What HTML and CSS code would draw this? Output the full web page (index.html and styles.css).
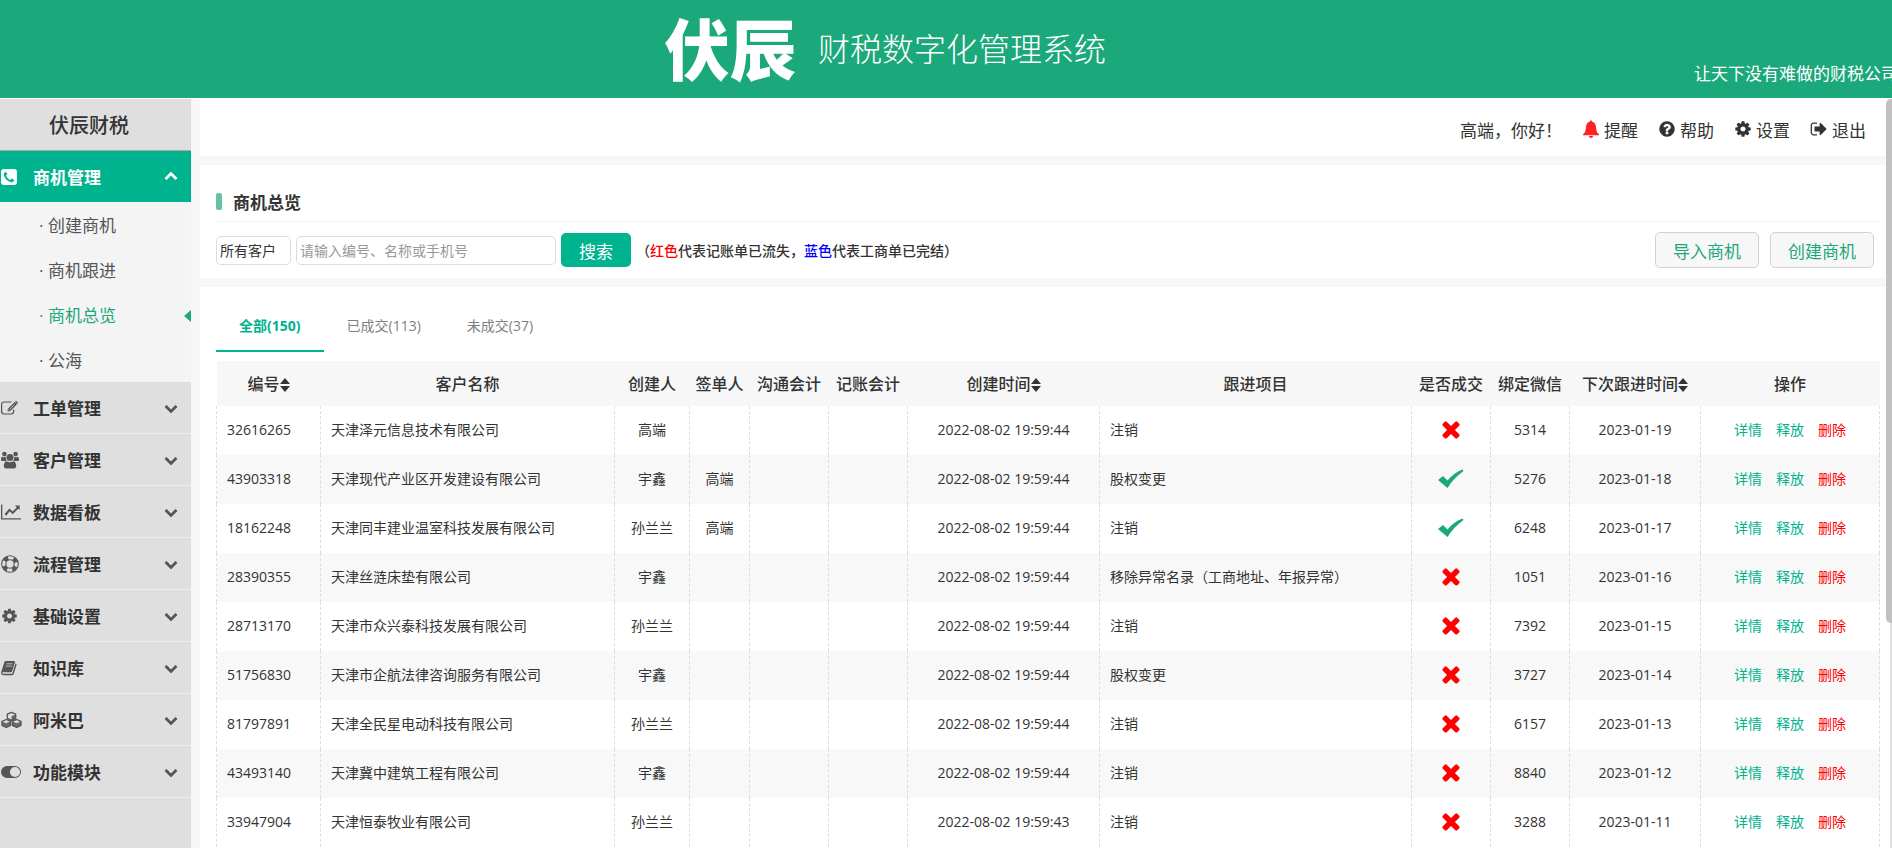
FILE: index.html
```html
<!DOCTYPE html>
<html lang="zh-CN">
<head>
    <meta charset="UTF-8">
    <meta name="viewport" content="width=device-width, initial-scale=1.0">
    <title>财税数字化管理系统</title>
    <link rel="stylesheet" href="styles.css">
</head>
<body>
    <svg class="sprite" aria-hidden="true">
        <symbol id="i-cog" viewBox="0 0 1792 1792"><path d="M1152 896q0-106-75-181t-181-75-181 75-75 181 75 181 181 75 181-75 75-181zm512-109v222q0 12-8 23t-20 13l-185 28q-19 54-39 91 35 50 107 138 10 12 10 25t-9 23q-27 37-99 108t-94 71q-12 0-26-9l-138-108q-44 23-91 38-16 136-29 186-7 28-36 28h-222q-14 0-24.5-8.5t-11.5-21.5l-28-184q-49-16-90-37l-141 107q-10 9-25 9-14 0-25-11-126-114-165-168-7-10-7-23 0-12 8-23 15-21 51-66.5t54-70.5q-27-50-41-99l-183-27q-13-2-21-12.5t-8-23.5v-222q0-12 8-23t19-13l186-28q14-46 39-92-40-57-107-138-10-12-10-24 0-10 9-23 26-36 98.5-107.5t94.5-71.5q13 0 26 10l138 107q44-23 91-38 16-136 29-186 7-28 36-28h222q14 0 24.5 8.5t11.5 21.5l28 184q49 16 90 37l142-107q9-9 24-9 13 0 25 10 129 119 165 170 7 8 7 22 0 12-8 23-15 21-51 66.5t-54 70.5q26 50 41 98l183 28q13 2 21 12.5t8 23.5z"/></symbol>
        <symbol id="i-times" viewBox="0 0 1792 1792"><path d="M1490 1322q0 40-28 68l-136 136q-28 28-68 28t-68-28l-294-294-294 294q-28 28-68 28t-68-28l-136-136q-28-28-28-68t28-68l294-294-294-294q-28-28-28-68t28-68l136-136q28-28 68-28t68 28l294 294 294-294q28-28 68-28t68 28l136 136q28 28 28 68t-28 68l-294 294 294 294q28 28 28 68z"/></symbol>
        <symbol id="i-check" viewBox="0 0 26 20"><path d="M0 11L5 7L9.500 11.500C14 6 19 2.500 24.500 0.500L25.500 2C19 6.500 13.500 12.500 9.500 19Z"/></symbol>
        <symbol id="i-down" viewBox="0 0 1792 1792"><path d="M1683 808l-742 741q-19 19-45 19t-45-19l-742-741q-19-19-19-45.5t19-45.5l166-165q19-19 45-19t45 19l531 531 531-531q19-19 45-19t45 19l166 165q19 19 19 45.5t-19 45.5z"/></symbol>
        <symbol id="i-help" viewBox="0 0 1792 1792"><path d="M1024 1376v-192q0-14-9-23t-23-9h-192q-14 0-23 9t-9 23v192q0 14 9 23t23 9h192q14 0 23-9t9-23zm256-672q0-88-55.5-163t-138.5-116-170-41q-243 0-371 213-15 24 8 42l132 100q7 6 19 6 16 0 25-12 53-68 86-92 34-24 86-24 48 0 85.500 26t37.500 59q0 38-20 61t-68 45q-63 28-115.500 86.500t-52.500 125.500v36q0 14 9 23t23 9h192q14 0 23-9t9-23q0-19 21.500-49.500t54.500-49.500q32-18 49-28.500t46-35 44.500-48 28-60.500 12.500-81zm384 192q0 209-103 385.500t-279.500 279.500-385.500 103-385.500-103-279.500-279.500-103-385.500 103-385.500 279.500-279.500 385.500-103 385.500 103 279.500 279.500 103 385.500z"/></symbol>
        <symbol id="i-out" viewBox="0 0 1792 1792"><path d="M704 1440q0 4 1 20t.5 26.5-3 23.5-10 19.5-20.5 6.5h-320q-119 0-203.500-84.500t-84.500-203.500v-704q0-119 84.500-203.500t203.500-84.500h320q13 0 22.500 9.500t9.500 22.500q0 4 1 20t.5 26.500-3 23.500-10 19.500-20.500 6.500h-320q-66 0-113 47t-47 113v704q0 66 47 113t113 47h312l11.500 1 11.500 3 8 5.500 7 9 2 13.500zm928-544q0 26-19 45l-544 544q-19 19-45 19t-45-19-19-45v-288h-448q-26 0-45-19t-19-45v-384q0-26 19-45t45-19h448v-288q0-26 19-45t45-19 45 19l544 544q19 19 19 45z"/></symbol>
        <symbol id="i-bell" viewBox="0 0 16 18"><path d="M8 0.500c-.8 0-1.300.5-1.300 1.200C4 2.300 3.200 4.600 3 7c-.2 3.500-.8 5.500-3 7.300V15.300h16v-1C13.800 12.500 13.200 10.500 13 7c-.2-2.400-1-4.700-3.700-5.300C9.300 1 8.800.5 8 .5zM5.800 16c.2 1.200 1 2 2.200 2s2-.8 2.200-2z"/></symbol>
        <symbol id="i-phone" viewBox="0 0 16 16"><path fill-rule="evenodd" d="M3 0h10a3 3 0 0 1 3 3v10a3 3 0 0 1-3 3H3a3 3 0 0 1-3-3V3a3 3 0 0 1 3-3zM4.500 3C3.300 3.500 2.700 4.500 2.800 5.600c.5 3.800 4 7.300 7.800 7.700 1.200 0 2.300-.8 2.600-2.200L10.700 9.600 9.300 11C7.500 10.200 5.800 8.500 5 6.700L6.300 5.400 5 3z"/></symbol>
        <symbol id="i-edit" viewBox="0 0 17 14"><path fill="none" stroke="currentColor" stroke-width="1.200" d="M10.500 1H3A2.400 2.400 0 0 0 .6 3.400v7.200A2.400 2.400 0 0 0 3 13h7.200a2.400 2.400 0 0 0 2.400-2.400V8.500"/><path d="M13.700 1l2.300 2.300-7 7H6.700V8zM14.300.4c.4-.4 1-.4 1.400 0l.9.900c.4.4.4 1 0 1.400l-.3.300L14 .7z"/><path fill="none" stroke="#dfdfdf" stroke-width=".7" d="M8.700 8.300l4.800-4.800M7.500 8.300l1.200 1.200"/></symbol>
        <symbol id="i-users" viewBox="0 0 18 17"><circle cx="3.400" cy="2.600" r="2.300"/><circle cx="14.600" cy="2.600" r="2.300"/><circle cx="9" cy="6" r="3.500"/><path d="M1.300 5.200c1 .6 2.500.7 4 .2C4.500 7.500 5 8.700 6 9.500H1.500C.5 9.500 0 9 0 8c0-1.300.4-2.600 1.300-2.800zM16.700 5.200c-1 .6-2.500.7-4 .2.800 2.100.3 3.300-.7 4.100h4.500c1 0 1.500-.5 1.500-1.500 0-1.300-.4-2.600-1.300-2.800zM5.600 9.800c2.200 1.200 4.600 1.200 6.800 0 2 .4 2.800 2.500 2.800 4.800 0 1.500-.9 2.400-2.300 2.400H5.100c-1.400 0-2.300-.9-2.300-2.400 0-2.300.8-4.400 2.800-4.800z"/></symbol>
        <symbol id="i-chart" viewBox="0 0 20 15"><path d="M0 0h1.300v13.700H20V15H0zM14 1h4.700v4.700l-1.500-1.500-5.500 5.500-3-3-3.500 4.600-1.700-1.700 5-5.700 3.200 3 4-4z"/></symbol>
        <symbol id="i-ring" viewBox="0 0 18 18"><path fill="none" stroke="currentColor" stroke-width="1.100" d="M9 .7a8.300 8.300 0 1 1 0 16.600A8.300 8.300 0 0 1 9 .7zM9 4.800a4.200 4.200 0 1 1 0 8.400 4.200 4.200 0 0 1 0-8.400z"/><circle cx="9" cy="9" r="6.300" fill="none" stroke="currentColor" stroke-width="4" stroke-dasharray="4.500 5.396" stroke-dashoffset="-2.700"/></symbol>
        <symbol id="i-book" viewBox="0 0 17 16"><path fill-rule="evenodd" d="M5.200.6h8.600c.8 0 1.200.6 1 1.300l-3 9.600c-.2.700-.8 1.100-1.500 1.100H2c-.7 0-1 .4-.8.900.2.500.6.600 1.100.600h8.900c.5 0 .8-.3 1-.7L15.500 3c1 .4 1.200 1 1 1.800l-2.900 9.300c-.3.900-1 1.500-2 1.500H2.500C.8 15.600-.3 14 .2 12.500L3.500 2C3.800 1.100 4.300.6 5.200.6zM5.900 3.200l-.3.900h6.500l.3-.9zM5.200 5.600l-.3.900h6.500l.3-.9z"/></symbol>
        <symbol id="i-cubes" viewBox="0 0 21 17"><path fill="#dfdfdf" stroke="currentColor" stroke-width="1.300" stroke-linejoin="round" d="M10.500.8l4.200 1.800v4.200l-4.200 2-4.200-2V2.600zM5.300 8l4.300 1.800V14l-4.300 2L1 14V9.800zM15.700 8L20 9.800V14l-4.300 2-4.300-2V9.800z"/><path d="M10.500 4.700l4.200-2v4.100l-4.200 2zM5.300 11.800l4.300-2V14l-4.300 2zM15.700 11.800l4.300-2V14l-4.300 2zM1 10l4.300 1.800V16L1 14zM11.400 10l4.300 1.800V16l-4.300-2z" fill-opacity=".85"/></symbol>
        <symbol id="i-toggle" viewBox="0 0 20 12"><path fill-rule="evenodd" d="M6 0h8a6 6 0 0 1 0 12H6A6 6 0 0 1 6 0zm8 .9a5.100 5.100 0 1 0 0 10.200A5.100 5.100 0 0 0 14 .9z"/></symbol>
        <symbol id="i-sort" viewBox="0 0 10 14"><path d="M5 0l5 6H0zM5 14L0 8h10z"/></symbol>
    </svg>

    <header class="banner">
        <div class="brand">
            <span class="brand-logo">伏辰</span>
            <h1 class="brand-name">财税数字化管理系统</h1>
        </div>
        <p class="slogan">让天下没有难做的财税公司</p>
    </header>

    <div class="layout">
        <nav class="sidebar">
            <h2 class="company">伏辰财税</h2>
            <button class="menu open"><svg class="menu-icon" style="--w: 16px"><use href="#i-phone"/></svg>商机管理<svg class="arrow"><use href="#i-down"/></svg></button>
            <ul class="submenu">
                <li><a href="#">· 创建商机</a></li>
                <li><a href="#">· 商机跟进</a></li>
                <li><a href="#" class="current">· 商机总览</a></li>
                <li><a href="#">· 公海</a></li>
            </ul>
            <button class="menu"><svg class="menu-icon" style="--w: 17px"><use href="#i-edit"/></svg>工单管理<svg class="arrow"><use href="#i-down"/></svg></button>
            <button class="menu"><svg class="menu-icon" style="--w: 18px"><use href="#i-users"/></svg>客户管理<svg class="arrow"><use href="#i-down"/></svg></button>
            <button class="menu"><svg class="menu-icon" style="--w: 20px"><use href="#i-chart"/></svg>数据看板<svg class="arrow"><use href="#i-down"/></svg></button>
            <button class="menu"><svg class="menu-icon" style="--w: 18px"><use href="#i-ring"/></svg>流程管理<svg class="arrow"><use href="#i-down"/></svg></button>
            <button class="menu"><svg class="menu-icon" style="--w: 17px"><use href="#i-cog"/></svg>基础设置<svg class="arrow"><use href="#i-down"/></svg></button>
            <button class="menu"><svg class="menu-icon" style="--w: 16px"><use href="#i-book"/></svg>知识库<svg class="arrow"><use href="#i-down"/></svg></button>
            <button class="menu"><svg class="menu-icon" style="--w: 21px"><use href="#i-cubes"/></svg>阿米巴<svg class="arrow"><use href="#i-down"/></svg></button>
            <button class="menu"><svg class="menu-icon" style="--w: 20px"><use href="#i-toggle"/></svg>功能模块<svg class="arrow"><use href="#i-down"/></svg></button>
        </nav>

        <main class="content">
            <div class="topbar">
                <span>高端，你好！</span>
                <a href="#"><svg class="bell"><use href="#i-bell"/></svg>提醒</a>
                <a href="#"><svg><use href="#i-help"/></svg>帮助</a>
                <a href="#"><svg><use href="#i-cog"/></svg>设置</a>
                <a href="#"><svg><use href="#i-out"/></svg>退出</a>
            </div>

            <section class="panel">
                <h2 class="title">商机总览</h2>
                <form class="search">
                    <select aria-label="客户范围"><option>所有客户</option></select>
                    <input type="text" aria-label="搜索" placeholder="请输入编号、名称或手机号">
                    <button type="button" class="btn-search">搜索</button>
                    <p class="note">（<span class="red">红色</span>代表记账单已流失，<span class="blue">蓝色</span>代表工商单已完结）</p>
                    <div class="actions">
                        <button type="button">导入商机</button>
                        <button type="button">创建商机</button>
                    </div>
                </form>
            </section>

            <section class="panel list">
                <div class="tabs">
                    <a href="#" class="active">全部(150)</a>
                    <a href="#">已成交(113)</a>
                    <a href="#">未成交(37)</a>
                </div>
                <table>
                    <colgroup>
                        <col class="w-id"><col class="w-name"><col class="w-creator"><col class="w-signer"><col class="w-s"><col class="w-s"><col class="w-time"><col><col class="w-s"><col class="w-s"><col class="w-next"><col class="w-ops">
                    </colgroup>
                    <thead>
                        <tr>
                            <th>编号<svg class="sort"><use href="#i-sort"/></svg></th>
                            <th>客户名称</th>
                            <th>创建人</th>
                            <th>签单人</th>
                            <th>沟通会计</th>
                            <th>记账会计</th>
                            <th>创建时间<svg class="sort"><use href="#i-sort"/></svg></th>
                            <th>跟进项目</th>
                            <th>是否成交</th>
                            <th>绑定微信</th>
                            <th>下次跟进时间<svg class="sort"><use href="#i-sort"/></svg></th>
                            <th>操作</th>
                        </tr>
                    </thead>
                    <tbody>
                        <tr>
                            <td class="left">32616265</td><td class="left">天津泽元信息技术有限公司</td><td>高端</td><td></td><td></td><td></td>
                            <td>2022-08-02 19:59:44</td><td class="left">注销</td><td><svg class="no"><use href="#i-times"/></svg></td><td>5314</td><td>2023-01-19</td>
                            <td><a href="#">详情</a><a href="#">释放</a><a href="#" class="del">删除</a></td>
                        </tr>
                        <tr>
                            <td class="left">43903318</td><td class="left">天津现代产业区开发建设有限公司</td><td>宇鑫</td><td>高端</td><td></td><td></td>
                            <td>2022-08-02 19:59:44</td><td class="left">股权变更</td><td><svg class="yes"><use href="#i-check"/></svg></td><td>5276</td><td>2023-01-18</td>
                            <td><a href="#">详情</a><a href="#">释放</a><a href="#" class="del">删除</a></td>
                        </tr>
                        <tr>
                            <td class="left">18162248</td><td class="left">天津同丰建业温室科技发展有限公司</td><td>孙兰兰</td><td>高端</td><td></td><td></td>
                            <td>2022-08-02 19:59:44</td><td class="left">注销</td><td><svg class="yes"><use href="#i-check"/></svg></td><td>6248</td><td>2023-01-17</td>
                            <td><a href="#">详情</a><a href="#">释放</a><a href="#" class="del">删除</a></td>
                        </tr>
                        <tr>
                            <td class="left">28390355</td><td class="left">天津丝涟床垫有限公司</td><td>宇鑫</td><td></td><td></td><td></td>
                            <td>2022-08-02 19:59:44</td><td class="left">移除异常名录（工商地址、年报异常）</td><td><svg class="no"><use href="#i-times"/></svg></td><td>1051</td><td>2023-01-16</td>
                            <td><a href="#">详情</a><a href="#">释放</a><a href="#" class="del">删除</a></td>
                        </tr>
                        <tr>
                            <td class="left">28713170</td><td class="left">天津市众兴泰科技发展有限公司</td><td>孙兰兰</td><td></td><td></td><td></td>
                            <td>2022-08-02 19:59:44</td><td class="left">注销</td><td><svg class="no"><use href="#i-times"/></svg></td><td>7392</td><td>2023-01-15</td>
                            <td><a href="#">详情</a><a href="#">释放</a><a href="#" class="del">删除</a></td>
                        </tr>
                        <tr>
                            <td class="left">51756830</td><td class="left">天津市企航法律咨询服务有限公司</td><td>宇鑫</td><td></td><td></td><td></td>
                            <td>2022-08-02 19:59:44</td><td class="left">股权变更</td><td><svg class="no"><use href="#i-times"/></svg></td><td>3727</td><td>2023-01-14</td>
                            <td><a href="#">详情</a><a href="#">释放</a><a href="#" class="del">删除</a></td>
                        </tr>
                        <tr>
                            <td class="left">81797891</td><td class="left">天津全民星电动科技有限公司</td><td>孙兰兰</td><td></td><td></td><td></td>
                            <td>2022-08-02 19:59:44</td><td class="left">注销</td><td><svg class="no"><use href="#i-times"/></svg></td><td>6157</td><td>2023-01-13</td>
                            <td><a href="#">详情</a><a href="#">释放</a><a href="#" class="del">删除</a></td>
                        </tr>
                        <tr>
                            <td class="left">43493140</td><td class="left">天津冀中建筑工程有限公司</td><td>宇鑫</td><td></td><td></td><td></td>
                            <td>2022-08-02 19:59:44</td><td class="left">注销</td><td><svg class="no"><use href="#i-times"/></svg></td><td>8840</td><td>2023-01-12</td>
                            <td><a href="#">详情</a><a href="#">释放</a><a href="#" class="del">删除</a></td>
                        </tr>
                        <tr>
                            <td class="left">33947904</td><td class="left">天津恒泰牧业有限公司</td><td>孙兰兰</td><td></td><td></td><td></td>
                            <td>2022-08-02 19:59:43</td><td class="left">注销</td><td><svg class="no"><use href="#i-times"/></svg></td><td>3288</td><td>2023-01-11</td>
                            <td><a href="#">详情</a><a href="#">释放</a><a href="#" class="del">删除</a></td>
                        </tr>
                    </tbody>
                </table>
            </section>
            <div class="scroll-track"><div class="scroll-thumb"></div></div>
        </main>
    </div>
</body>
</html>
```

FILE: styles.css
```css
* {
    box-sizing: border-box;
}
body {
    margin: 0;
    height: 100vh;
    overflow: hidden;
    display: flex;
    flex-direction: column;
    font-family: "Open Sans", "Noto Sans CJK SC", sans-serif;
    font-size: 14px;
    color: #333;
    background-color: #fff;
}
h1, h2, p, ul {
    margin: 0;
    padding: 0;
}
ul {
    list-style: none;
}
a {
    color: inherit;
    text-decoration: none;
}
button, input, select {
    font-family: inherit;
    margin: 0;
}
svg {
    fill: currentColor;
}
.sprite {
    display: none;
}

/* banner */
.banner {
    position: relative;
    flex: none;
    height: 98px;
    margin-bottom: 1px;
    background-color: #1ba87b;
    color: #fff;
    overflow: hidden;
}
.brand {
    display: flex;
    align-items: center;
    justify-content: center;
    gap: 22px;
    height: 98px;
    padding-right: 122px;
}
.brand-logo {
    font-size: 66px;
    font-weight: 900;
    line-height: 98px;
}
.brand-name {
    font-size: 32px;
    font-weight: 300;
    line-height: 98px;
}
.slogan {
    position: absolute;
    left: calc(100% - 198px);
    top: 60px;
    font-size: 17px;
    line-height: 28px;
    white-space: nowrap;
}

/* sidebar */
.layout {
    flex: 1;
    min-height: 0;
    display: flex;
    gap: 9px;
    background-color: #f7f7f7;
}
.sidebar {
    flex: none;
    width: 191px;
    background-color: #dfdfdf;
    overflow: hidden;
}
.company {
    height: 52px;
    padding-right: 13px;
    border-bottom: 1px solid #aaa;
    font-size: 20px;
    font-weight: 500;
    line-height: 53px;
    text-align: center;
}
.menu {
    display: grid;
    grid-template-columns: 32px 1fr 14px;
    align-items: center;
    width: 100%;
    height: 52px;
    padding: 0 13px 0 1px;
    border: 0;
    border-bottom: 1px solid #eee;
    background: none;
    color: #333;
    font-size: 17px;
    font-weight: 700;
    text-align: left;
}
.menu.open {
    height: 51px;
    border-bottom: 0;
    background-color: #00b38f;
    color: #fff;
}
.menu-icon {
    width: var(--w);
    height: 18px;
    color: #555;
}
.arrow {
    width: 14px;
    height: 14px;
    color: #555;
}
.open .menu-icon, .open .arrow {
    color: #fff;
}
.open .menu-icon {
    height: 16px;
}
.open .arrow {
    transform: rotate(180deg);
}
.submenu {
    background-color: #f4f4f4;
}
.submenu a {
    display: block;
    position: relative;
    height: 45px;
    padding-left: 39px;
    color: #555;
    font-size: 17px;
    line-height: 48px;
}
.submenu .current {
    color: #1ba87b;
}
.submenu .current::after {
    content: "";
    position: absolute;
    right: 0;
    top: 18px;
    border: 6px solid transparent;
    border-right: 7px solid #1ba87b;
    border-left: 0;
}

/* content */
.content {
    position: relative;
    flex: 1;
    min-width: 0;
    display: flex;
    flex-direction: column;
    gap: 9px;
}
.topbar {
    display: flex;
    align-items: center;
    justify-content: flex-end;
    gap: 20px;
    height: 57px;
    flex: none;
    padding: 3px 26px 0 0;
    background-color: #fff;
    font-size: 17px;
}
.topbar a {
    display: flex;
    align-items: center;
    gap: 4px;
}
.topbar svg {
    width: 18px;
    height: 18px;
}
.topbar .bell {
    color: #f22;
}
.panel {
    padding: 22px 12px 0 16px;
    background-color: #fff;
}
.title {
    display: flex;
    align-items: center;
    gap: 11px;
    height: 35px;
    padding-bottom: 6px;
    border-bottom: 1px solid #f1f1f1;
    font-size: 17px;
    font-weight: 700;
}
.title::before {
    content: "";
    width: 6px;
    height: 17px;
    border-radius: 2px;
    background-color: #66c2a5;
}
.search {
    display: flex;
    align-items: center;
    gap: 5px;
    height: 56px;
    padding-right: 6px;
}
.search select, .search input {
    height: 29px;
    padding: 0 3px;
    border: 1px solid #ddd;
    border-radius: 5px;
    background-color: #fff;
    color: #333;
    font-size: 14px;
}
.search select {
    appearance: none;
    width: 75px;
}
.search input {
    width: 260px;
}
.search input::placeholder {
    color: #999;
}
.btn-search {
    width: 70px;
    height: 34px;
    border: 0;
    border-radius: 5px;
    background-color: #00b38f;
    color: #fff;
    font-size: 17px;
}
.note {
    font-weight: 500;
}
.red {
    color: #f00;
}
.blue {
    color: #00f;
}
.actions {
    display: flex;
    gap: 11px;
    margin-left: auto;
}
.actions button {
    height: 36px;
    padding: 0 17px;
    border: 1px solid #d2d2d2;
    border-radius: 5px;
    background-color: #f7f7f7;
    color: #1ba87b;
    font-size: 17px;
}

/* list */
.list {
    flex: 1;
    min-height: 0;
    padding-top: 0;
    overflow: hidden;
}
.tabs {
    display: flex;
    margin-bottom: 9px;
}
.tabs a {
    height: 65px;
    padding: 0 23px;
    border-bottom: 2px solid transparent;
    color: #808080;
    line-height: 78px;
}
.tabs .active {
    border-color: #00b38f;
    color: #00b38f;
    font-weight: 700;
}
table {
    width: 100%;
    table-layout: fixed;
    border-collapse: collapse;
}
.w-id {
    width: 104px;
}
.w-name {
    width: 294px;
}
.w-creator {
    width: 75px;
}
.w-signer {
    width: 60px;
}
.w-s {
    width: 79px;
}
.w-time {
    width: 192px;
}
.w-next {
    width: 131px;
}
.w-ops {
    width: 179px;
}
th {
    height: 45px;
    padding: 0 0 2px;
    background-color: #f7f7f7;
    font-size: 16px;
    font-weight: 500;
    white-space: nowrap;
}
td {
    height: 49px;
    padding: 0 0 3px;
    border-left: 1px dashed #ddd;
    border-right: 1px dashed #ddd;
    text-align: center;
    white-space: nowrap;
}
td.left {
    padding-left: 10px;
    text-align: left;
}
tbody tr:nth-child(even) {
    background-color: #f8f8f8;
}
td a {
    color: #00b38f;
}
td a + a {
    margin-left: 14px;
}
td .del {
    color: #f00;
}
td svg {
    vertical-align: middle;
}
.sort {
    width: 10px;
    height: 14px;
    vertical-align: -2px;
}
.no {
    width: 26px;
    height: 26px;
    color: #f00;
}
.yes {
    width: 26px;
    height: 20px;
    color: #1ba87b;
}
.scroll-track {
    position: absolute;
    right: 0;
    top: 0;
    width: 6px;
    height: 100%;
    border-right: 2px solid #e1e1e1;
}
.scroll-thumb {
    width: 6px;
    height: 70%;
    border-radius: 5px 0 0 5px;
    background-color: #c1c1c1;
}
```
